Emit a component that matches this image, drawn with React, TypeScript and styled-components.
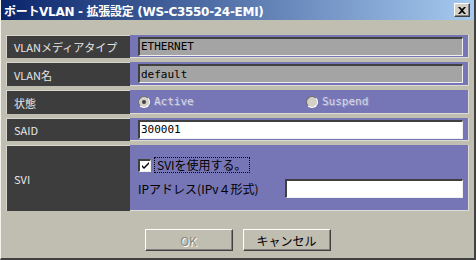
import * as React from 'react';
import styled, { createGlobalStyle } from "styled-components";

const GlobalStyle = createGlobalStyle`
    html, body { margin: 0; padding: 0; background: #c0bdb1; }
    body { font-family: "Noto Sans CJK JP", "DejaVu Sans", sans-serif; }
`;

const Window = styled.div`
    width: 476px;
    height: 260px;
    box-sizing: border-box;
    display: flex;
    flex-direction: column;
    background: #c0bdb1;
    border-left: 1px solid #f4f2ec;
    border-right: 2px solid #404040;
    border-bottom: 2px solid #404040;
`;

const TitleBar = styled.div`
    height: 20px;
    flex: none;
    display: flex;
    align-items: center;
    justify-content: space-between;
    padding: 0 4px 0 3px;
    background: linear-gradient(to right, #0a246a, #a6caf0);
`;

const TitleText = styled.span`
    color: #fff;
    font-family: "DejaVu Sans", "Noto Sans CJK JP", sans-serif;
    font-weight: bold;
    font-size: 12px;
    letter-spacing: -0.3px;
    white-space: nowrap;
`;

const CloseButton = styled.div`
    width: 16px;
    height: 14px;
    box-sizing: border-box;
    display: flex;
    align-items: center;
    justify-content: center;
    background: #d4d0c8;
    border-top: 1px solid #fff;
    border-left: 1px solid #fff;
    border-right: 1px solid #404040;
    border-bottom: 1px solid #404040;
    box-shadow: inset -1px -1px 0 #808080;
`;

const Body = styled.div`
    flex: 1;
    display: flex;
    flex-direction: column;
    padding: 15px 5px 0 5px;
`;

const FormGrid = styled.div`
    display: grid;
    grid-template-columns: 124px minmax(0, 1fr);
    grid-template-rows: 23px 24px 24px 23px 66px;
    row-gap: 4px;
`;

const LabelCell = styled.div`
    background: #3d3d3d;
    color: #e6e6e6;
    font-size: 11px;
    display: flex;
    align-items: center;
    padding-left: 7px;
    border-left: 1px solid #d8d6ce;
    border-top: 1px solid #d8d6ce;
`;

const ValueCell = styled.div<{ $stack?: boolean }>`
    min-width: 0;
    background: #7676b6;
    display: flex;
    flex-direction: ${(p) => (p.$stack ? "column" : "row")};
    justify-content: ${(p) => (p.$stack ? "center" : "flex-start")};
    align-items: ${(p) => (p.$stack ? "stretch" : "center")};
    gap: ${(p) => (p.$stack ? "6px" : "0")};
    padding: 0 5px 0 8px;
    border-right: 1px solid #dedcd4;
    border-bottom: 1px solid #dedcd4;
`;

const TextBox = styled.div<{ $disabled?: boolean; $width?: string }>`
    flex: ${(p) => (p.$width ? "none" : "1")};
    min-width: 0;
    width: ${(p) => p.$width ?? "auto"};
    height: 19px;
    box-sizing: border-box;
    display: flex;
    align-items: center;
    padding-left: 1px;
    background: ${(p) => (p.$disabled ? "#a4a4a4" : "#fff")};
    color: #000;
    font-family: "DejaVu Sans Mono", "Noto Sans CJK JP", monospace;
    font-size: 11px;
    border-top: 2px solid #404040;
    border-left: 2px solid #404040;
    border-right: 1px solid #f0f0f0;
    border-bottom: 1px solid #f0f0f0;
`;

const RadioGroup = styled.div`
    display: flex;
    align-items: center;
    flex: 1;
    min-width: 0;
`;

const RadioOption = styled.label<{ $width?: string }>`
    width: ${(p) => p.$width ?? "auto"};
    flex: none;
    display: flex;
    align-items: center;
    gap: 4px;
    color: #d8d8e4;
    font-family: "DejaVu Sans Mono", monospace;
    font-size: 11px;
    text-shadow: 1px 1px 0 #9a9ac8;
`;

const RadioDot = styled.span<{ $checked?: boolean }>`
    width: 12px;
    height: 12px;
    box-sizing: border-box;
    border-radius: 50%;
    background: #d4d0c8;
    border: 1px solid #6b6b6b;
    border-right-color: #fff;
    border-bottom-color: #fff;
    display: flex;
    align-items: center;
    justify-content: center;
    &::after {
        content: "";
        display: ${(p) => (p.$checked ? "block" : "none")};
        width: 4px;
        height: 4px;
        border-radius: 50%;
        background: #404040;
    }
`;

const CheckRow = styled.div`
    display: flex;
    align-items: center;
    gap: 3px;
`;

const CheckBox = styled.span`
    width: 13px;
    height: 13px;
    box-sizing: border-box;
    background: #fff;
    border-top: 2px solid #404040;
    border-left: 2px solid #404040;
    border-right: 1px solid #f0f0f0;
    border-bottom: 1px solid #f0f0f0;
    display: flex;
    align-items: center;
    justify-content: center;
`;

const FocusLabel = styled.span`
    color: #000;
    font-size: 12px;
    padding: 0 2px;
    border: 1px dotted #000;
    line-height: 14px;
`;

const IpRow = styled.div`
    display: flex;
    align-items: center;
    justify-content: space-between;
    color: #000;
    font-size: 12px;
`;

const ButtonRow = styled.div`
    display: flex;
    justify-content: center;
    gap: 10px;
    margin-top: 18px;
`;

const Button = styled.button<{ $disabled?: boolean }>`
    width: 88px;
    height: 22px;
    box-sizing: border-box;
    background: #c0bdb1;
    font-family: "Noto Sans CJK JP", sans-serif;
    font-size: 12px;
    color: ${(p) => (p.$disabled ? "#8a8880" : "#000")};
    text-shadow: ${(p) => (p.$disabled ? "1px 1px 0 #fff" : "none")};
    border-top: 1px solid #fff;
    border-left: 1px solid #fff;
    border-right: 1px solid #404040;
    border-bottom: 1px solid #404040;
    box-shadow: inset -1px -1px 0 #808080;
    padding: 0;
`;

const App: React.FC = () => {
    return (
        <>
            <GlobalStyle/>
            <Window>
                <TitleBar>
                    <TitleText>ポートVLAN - 拡張設定 (WS-C3550-24-EMI)</TitleText>
                    <CloseButton>
                        <svg width="8" height="7" viewBox="0 0 8 7">
                            <path d="M0 0h2l2 2 2-2h2L5 3.5 8 7H6L4 5 2 7H0l3-3.5z" fill="#000"/>
                        </svg>
                    </CloseButton>
                </TitleBar>
                <Body>
                    <FormGrid>
                        <LabelCell>VLANメディアタイプ</LabelCell>
                        <ValueCell><TextBox $disabled>ETHERNET</TextBox></ValueCell>

                        <LabelCell>VLAN名</LabelCell>
                        <ValueCell><TextBox $disabled>default</TextBox></ValueCell>

                        <LabelCell>状態</LabelCell>
                        <ValueCell>
                            <RadioGroup>
                                <RadioOption $width="168px"><RadioDot $checked/>Active</RadioOption>
                                <RadioOption><RadioDot/>Suspend</RadioOption>
                            </RadioGroup>
                        </ValueCell>

                        <LabelCell>SAID</LabelCell>
                        <ValueCell><TextBox>300001</TextBox></ValueCell>

                        <LabelCell>SVI</LabelCell>
                        <ValueCell $stack>
                            <CheckRow>
                                <CheckBox>
                                    <svg width="7" height="7" viewBox="0 0 7 7">
                                        <path d="M0 3l2 2 5-5v2L2 7 0 5z" fill="#000"/>
                                    </svg>
                                </CheckBox>
                                <FocusLabel>SVIを使用する。</FocusLabel>
                            </CheckRow>
                            <IpRow>
                                IPアドレス(IPv４形式)
                                <TextBox $width="178px"></TextBox>
                            </IpRow>
                        </ValueCell>
                    </FormGrid>
                    <ButtonRow>
                        <Button $disabled>OK</Button>
                        <Button>キャンセル</Button>
                    </ButtonRow>
                </Body>
            </Window>
        </>
    );
};

export default App;
